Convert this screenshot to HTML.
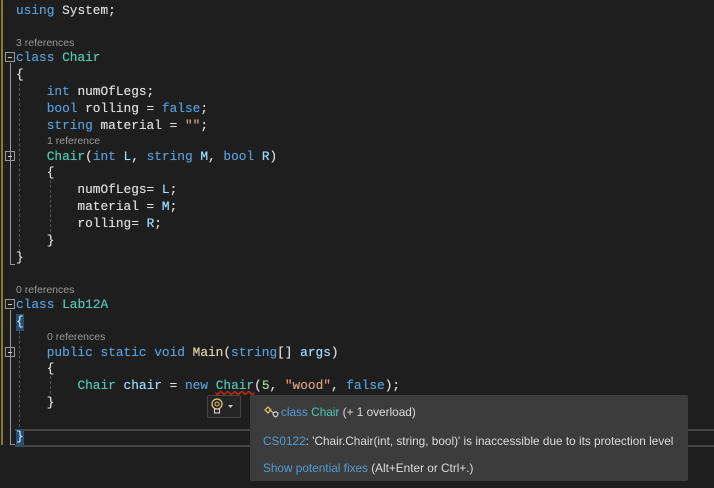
<!DOCTYPE html><html><head><style>
body{margin:0;width:714px;height:488px;background:#1e1e1e;overflow:hidden;position:relative;font-family:"Liberation Mono",monospace}
.l{position:absolute;left:16px;font-size:12.8px;line-height:17px;height:17px;color:#dcdcdc;white-space:pre;text-shadow:0 0 0.4px currentColor}
.c{position:absolute;font-family:"Liberation Sans",sans-serif;font-size:10.5px;color:#999;white-space:pre}
.k{color:#569cd6}.t{color:#4ec9b0}.s{color:#d69d85}.m{color:#dcdcaa}.p{color:#9cdcfe}
.box{position:absolute;width:8px;height:8px;border:1px solid #999;left:5px}
.box:after{content:"";position:absolute;left:2px;top:4px;width:4px;height:1px;background:#ccc}
.vl{position:absolute;width:1px;background:#999;left:10px}
.dl{position:absolute;width:0;border-left:1px dashed #555}
.tt{position:absolute;left:250px;top:395px;width:438px;height:86px;background:#3c3c3c;border-radius:2px;font-family:"Liberation Sans",sans-serif;font-size:11.8px;color:#dcdcdc}
.tt div{position:absolute;left:13px;white-space:pre}
</style></head><body>
<div style="position:absolute;left:1px;top:0;width:2px;height:445px;background:#8a7a2a"></div>
<div class="l" style="top:2px"><span class="k">using</span> System;</div>
<div class="c" style="left:16px;top:37px">3 references</div>
<div class="box" style="top:52px"></div>
<div class="l" style="top:49px"><span class="k">class</span> <span class="t">Chair</span></div>
<div class="vl" style="top:63px;height:201px"></div>
<div style="position:absolute;left:10px;top:264px;width:5px;height:1px;background:#999"></div>
<div class="dl" style="left:19px;top:83px;height:174px"></div>
<div class="l" style="top:66px">{</div>
<div class="l" style="top:83px">    <span class="k">int</span> numOfLegs;</div>
<div class="l" style="top:100px">    <span class="k">bool</span> rolling = <span class="k">false</span>;</div>
<div class="l" style="top:117px">    <span class="k">string</span> material = <span class="s">""</span>;</div>
<div class="c" style="left:47px;top:135px">1 reference</div>
<div class="box" style="top:151px"></div>
<div class="l" style="top:148px">    <span class="t">Chair</span>(<span class="k">int</span> <span class="p">L</span>, <span class="k">string</span> <span class="p">M</span>, <span class="k">bool</span> <span class="p">R</span>)</div>
<div class="dl" style="left:50px;top:180px;height:52px"></div>
<div class="l" style="top:164px">    {</div>
<div class="l" style="top:181px">        numOfLegs= <span class="p">L</span>;</div>
<div class="l" style="top:198px">        material = <span class="p">M</span>;</div>
<div class="l" style="top:215px">        rolling= <span class="p">R</span>;</div>
<div class="l" style="top:232px">    }</div>
<div class="l" style="top:249px">}</div>
<div class="c" style="left:16px;top:284px">0 references</div>
<div class="box" style="top:299px"></div>
<div class="l" style="top:296px"><span class="k">class</span> <span class="t">Lab12A</span></div>
<div class="vl" style="top:310px;height:135px"></div>
<div style="position:absolute;left:10px;top:444px;width:5px;height:1px;background:#999"></div>
<div class="dl" style="left:19px;top:331px;height:96px"></div>
<div style="position:absolute;left:16px;top:314px;width:8px;height:17px;background:#264f78"></div>
<div class="l" style="top:313px">{</div>
<div class="c" style="left:47px;top:331px">0 references</div>
<div class="box" style="top:347px"></div>
<div class="l" style="top:344px">    <span class="k">public static void</span> <span class="m">Main</span>(<span class="k">string</span>[] <span class="p">args</span>)</div>
<div class="dl" style="left:50px;top:376px;height:18px"></div>
<div class="l" style="top:360px">    {</div>
<div class="l" style="top:377px">        <span class="t">Chair</span> <span class="p">chair</span> = <span class="k">new</span> <span class="t" style="text-decoration:underline wavy #e51400">Chair</span>(<span style="color:#b5cea8">5</span>, <span class="s">"wood"</span>, <span class="k">false</span>);</div>
<div class="l" style="top:394px">    }</div>
<div style="position:absolute;left:15px;top:429px;width:699px;height:14px;border-top:2px solid #464646;border-bottom:2px solid #464646"></div>
<div style="position:absolute;left:16px;top:429px;width:8px;height:17px;background:#264f78"></div>
<div class="l" style="top:428px">}</div>
<div style="position:absolute;left:207px;top:395px;width:32px;height:21px;border:1px solid #444;background:#252526;border-radius:2px">
<svg width="32" height="21" viewBox="0 0 32 21"><circle cx="9" cy="8" r="5" fill="none" stroke="#e8c46a" stroke-width="1.3"/><circle cx="9" cy="8" r="2" fill="none" stroke="#e8c46a"/><rect x="6.5" y="13" width="5" height="4" fill="none" stroke="#ddd"/><path d="M20 9h5l-2.5 3z" fill="#ccc"/></svg></div>
<div class="tt">
<div style="top:9px"><svg width="18" height="14" viewBox="0 0 18 14" style="vertical-align:-2px"><path d="M2 6l3-3 3 3-3 3z" fill="none" stroke="#d8b36a" stroke-width="1.3"/><path d="M6 6l5 3" stroke="#d8b36a" stroke-width="1.3"/><path d="M10 9q3-2 5 0q0 3-2.5 4q-2.5-1-2.5-4z" fill="none" stroke="#ccc" stroke-width="1.2"/></svg><span style="color:#569cd6">class</span> <span style="color:#4ec9b0">Chair</span> (+ 1 overload)</div>
<div style="top:39px"><span style="color:#569cd6">CS0122</span>: 'Chair.Chair(int, string, bool)' is inaccessible due to its protection level</div>
<div style="top:66px"><span style="color:#569cd6">Show potential fixes</span> (Alt+Enter or Ctrl+.)</div>
</div>
</body></html>
